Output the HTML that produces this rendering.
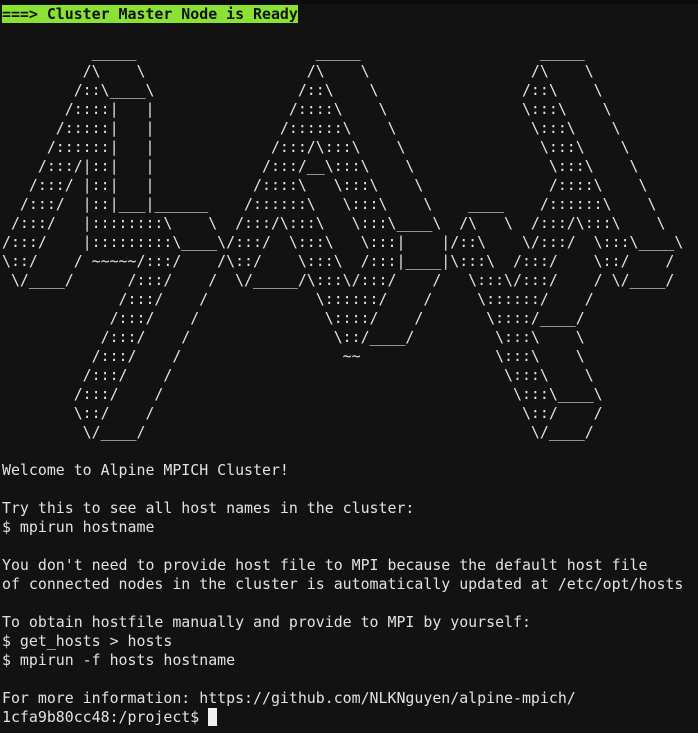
<!DOCTYPE html>
<html><head><meta charset="utf-8"><style>
html,body{margin:0;padding:0;background:#121212;width:698px;height:733px;overflow:hidden}
body{border-top:4px solid #0c0c0c;box-sizing:border-box}
pre{margin:0;padding:1px 0 0 2px;font-family:"DejaVu Sans Mono","Liberation Mono",monospace;font-size:14.9px;line-height:19px;color:#e2e2e2;white-space:pre}
.h{background:#8ae234;color:#111;font-weight:bold}
.c{background:#f0f0f0;color:#f0f0f0}
</style></head><body><pre><span class="h">===&gt; Cluster Master Node is Ready</span>

          _____                    _____                    _____
         /\    \                  /\    \                  /\    \
        /::\____\                /::\    \                /::\    \
       /::::|   |               /::::\    \               \:::\    \
      /:::::|   |              /::::::\    \               \:::\    \
     /::::::|   |             /:::/\:::\    \               \:::\    \
    /:::/|::|   |            /:::/__\:::\    \               \:::\    \
   /:::/ |::|   |           /::::\   \:::\    \              /::::\    \
  /:::/  |::|___|______    /::::::\   \:::\    \    ____    /::::::\    \
 /:::/   |::::::::\    \  /:::/\:::\   \:::\____\  /\   \  /:::/\:::\    \
/:::/    |:::::::::\____\/:::/  \:::\   \:::|    |/::\    \/:::/  \:::\____\
\::/    / ~~~~~/:::/    /\::/    \:::\  /:::|____|\:::\  /:::/    \::/    /
 \/____/      /:::/    /  \/_____/\:::\/:::/    /   \:::\/:::/    / \/____/
             /:::/    /            \::::::/    /     \::::::/    /
            /:::/    /              \::::/    /       \::::/____/
           /:::/    /                \::/____/         \:::\    \
          /:::/    /                  ~~               \:::\    \
         /:::/    /                                     \:::\    \
        /:::/    /                                       \:::\____\
        \::/    /                                         \::/    /
         \/____/                                           \/____/

Welcome to Alpine MPICH Cluster!

Try this to see all host names in the cluster:
$ mpirun hostname

You don't need to provide host file to MPI because the default host file
of connected nodes in the cluster is automatically updated at /etc/opt/hosts

To obtain hostfile manually and provide to MPI by yourself:
$ get_hosts &gt; hosts
$ mpirun -f hosts hostname

For more information: https://github.com/NLKNguyen/alpine-mpich/
1cfa9b80cc48:/project$ <span class="c">_</span></pre></body></html>
